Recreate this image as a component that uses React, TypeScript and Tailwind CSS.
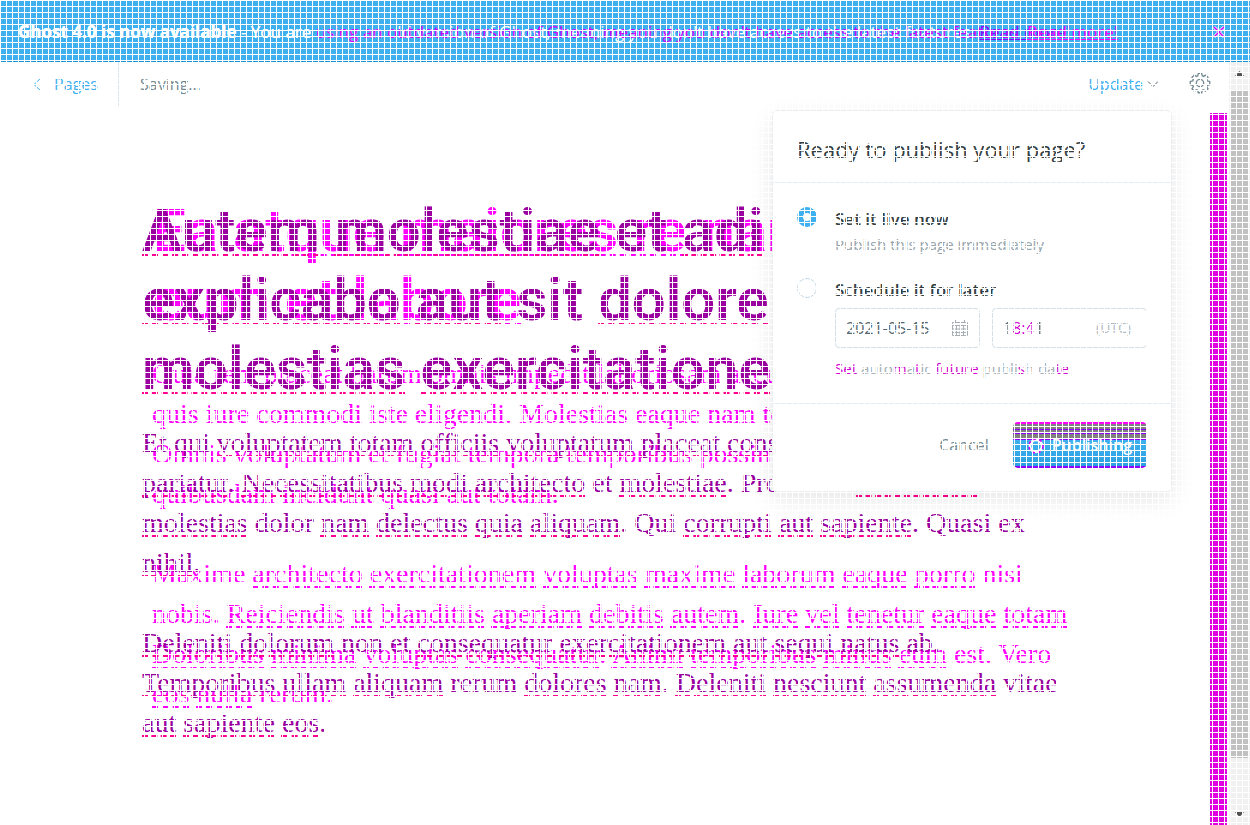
import React from "react";

const GRID =
  "pointer-events-none absolute inset-0 z-50 bg-[linear-gradient(to_right,#fff_1px,transparent_1px),linear-gradient(to_bottom,#fff_1px,transparent_1px)] bg-size-[6px_6px]";

/* Words wrapped in underscores carry a spelling mark. */
function Marked({ text, mark }: { text: string; mark: string }) {
  return (
    <>
      {text.split("_").map((part, i) =>
        i % 2 === 1 ? (
          <span key={i} className={mark}>
            {part}
          </span>
        ) : (
          part
        ),
      )}
    </>
  );
}

function Lines({ lines, mark }: { lines: string[]; mark: string }) {
  return (
    <>
      {lines.map((line) => (
        <span key={line} className="block">
          <Marked text={line} mark={mark} />
        </span>
      ))}
    </>
  );
}

const OLD_MARK =
  "underline decoration-dashed decoration-[#ff0090] decoration-2 underline-offset-[3px] [text-decoration-skip-ink:none]";
const NEW_MARK =
  "underline decoration-dashed decoration-[#ff00ff] decoration-2 underline-offset-[3px] [text-decoration-skip-ink:none]";

const SERIF = "font-['Liberation_Serif',serif] text-[28px] leading-10";
const TITLE =
  "font-['Roboto',sans-serif] text-[60px] leading-[69px] font-semibold";

function Banner() {
  return (
    <div className="flex h-[62px] items-center border-b border-[#1f93d8] bg-[#3eb0ef] pt-[2px] pr-[24px] pl-[18px] text-[17px] leading-6 text-white">
      <div className="grid flex-1 whitespace-nowrap">
        <p className="[grid-area:1/1]">
          <b>Ghost 4.0 is now available</b> - You are using an old version of
          Ghost, meaning you don't have access to the latest features.{" "}
          <a href="#more" className="text-[#9000ff] underline">
            Read more!
          </a>
        </p>
        <p aria-hidden="true" className="[grid-area:1/1] text-[#d000ff]">
          <b className="text-white">Ghost 4.0 is now available</b>
          <span className="text-white"> - You are </span>
          using an outdated version of Ghost, meaning you don't have access to
          the latest features.{" "}
          <span className="text-[#ff00ff] underline">Read more!</span>
        </p>
      </div>
      <button aria-label="Close">
        <svg width="14" height="14" viewBox="0 0 14 14" fill="none">
          <path d="M2 2l10 10M12 2L2 12" stroke="#fff" strokeWidth="3" />
          <path d="M2 2l10 10M12 2L2 12" stroke="#d000ff" strokeWidth="1.5" />
        </svg>
      </button>
    </div>
  );
}

function TopBar() {
  return (
    <header className="flex h-11 items-center text-[16px] leading-6">
      <a
        href="#pages"
        className="flex h-11 w-[119px] items-center gap-3 border-r border-[#dae6ee] pl-[33px] text-[#3eb0ef]"
      >
        <svg width="9" height="15" viewBox="0 0 9 15" fill="none">
          <path d="M8 1L1 7.500l7 6.500" stroke="#3eb0ef" />
        </svg>
        Pages
      </a>
      <span className="pl-[21px] text-[#738a94]">Saving...</span>
      <button className="ml-auto flex items-center gap-1 text-[#3eb0ef]">
        Update
        <svg width="12" height="8" viewBox="0 0 12 8" fill="none">
          <path d="M1 1.500l5 5 5-5" stroke="#54666d" />
        </svg>
      </button>
      <button aria-label="Settings" className="mr-[18px] mb-[2px] ml-[30px]">
        <svg width="22" height="22" viewBox="0 0 24 24" fill="none" stroke="#738a94" strokeWidth="1.5">
          <circle cx="12" cy="12" r="4" />
          <path d="M9.500 4.200L10.200 1.500h3.600l.700 2.700 1.300.600 2.400-1.400 2.500 2.500-1.400 2.400.600 1.300 2.700.700v3.600l-2.700.700-.600 1.300 1.400 2.400-2.500 2.500-2.400-1.400-1.300.600-.700 2.700h-3.600l-.700-2.700-1.300-.600-2.400 1.400-2.500-2.500 1.400-2.400-.600-1.300-2.700-.700v-3.600l2.700-.700.600-1.300-1.400-2.400 2.500-2.500 2.400 1.400z" />
        </svg>
      </button>
    </header>
  );
}

function Editor() {
  return (
    <article className="grid flex-1 pl-[142px] whitespace-nowrap">
      <div className="pt-[90px] [grid-area:1/1] text-[#ff00ff]">
        <h2 className={`${TITLE} pl-[10px]`}>
          <Lines
            mark={NEW_MARK}
            lines={["_Ea_ _atque_ _maiores re_ nam", "_eum et labore_"]}
          />
        </h2>
        <div className={`${SERIF} space-y-10 pt-[20px] pl-[10px]`}>
          <p>
            <Lines
              mark={NEW_MARK}
              lines={[
                "Quia rem placeat harum omnis impedit laboriosam accus",
                "quis iure commodi iste eligendi. Molestias eaque nam to",
                "Omnis voluptatum et fugiat tempora temporibus possim",
                "quibusdam incidunt quasi aut totam.",
              ]}
            />
          </p>
          <p>
            <Lines
              mark={NEW_MARK}
              lines={[
                "Maxime _architecto_ _exercitationem_ _voluptas_ _maxime_ _laborum_ _eaque_ _porro_ nisi",
                "nobis. _Reiciendis_ _ut_ _blanditiis_ _aperiam_ _debitis_ _autem_. _Iure_ _vel_ _tenetur_ _eaque_ _totam_",
                "_Doloribus_ _minima_ _voluptas_ _consequatur_. _Animi_ _temporibus_ _minus_ _eum_ est. Vero",
                "_eos_ _nulla_ rerum.",
              ]}
            />
          </p>
        </div>
      </div>
      <div className="pt-[90px] [grid-area:1/1] text-[#9a00a0]">
        <h1 className={TITLE}>
          <Lines
            mark={OLD_MARK}
            lines={[
              "_Autem_ _molestiae_ et _adi_",
              "_explicabo_ _aut_ sit _dolore_",
              "_molestias_ _exercitatione_",
            ]}
          />
        </h1>
        <div className={`${SERIF} space-y-10 pt-[20px]`}>
          <p>
            <Lines
              mark={OLD_MARK}
              lines={[
                "Et qui _voluptatem_ _totam_ _officiis_ _voluptatum_ _placeat_ _cons_",
                "_pariatur_. _Necessitatibus_ _modi_ _architecto_ et _molestiae_. Provident _accusamus_",
                "_molestias_ dolor _nam_ _delectus_ _quia_ _aliquam_. Qui _corrupti_ _aut_ _sapiente_. Quasi ex",
                "_nihil_.",
              ]}
            />
          </p>
          <p>
            <Lines
              mark={OLD_MARK}
              lines={[
                "_Deleniti_ _dolorum_ non et _consequatur_ _exercitationem_ _aut_ _sequi_ _natus_ ab.",
                "_Temporibus_ _ullam_ _aliquam_ rerum _dolores_ _nam_. _Deleniti_ _nesciunt_ _assumenda_ vitae",
                "_aut_ _sapiente_ _eos_.",
              ]}
            />
          </p>
        </div>
      </div>
    </article>
  );
}

const RADIO =
  "mt-[2px] size-5 shrink-0 appearance-none rounded-full border border-[#c5d7e4] bg-white checked:border-[6px] checked:border-[#3eb0ef]";
const LABEL = "block text-[17px] leading-7 font-semibold text-[#343f44]";
const FIELD = "h-10 rounded-[4px] border border-[#d3e0e9] pl-[10px] text-[16px]";

function PublishMenu() {
  return (
    <form className="absolute top-[48px] right-[78px] z-10 w-[400px] rounded-[5px] border border-[#ebeef0] bg-white shadow-[0_8px_24px_rgba(0,0,0,0.1)]">
      <h2 className="border-b border-[#e3ecf3] px-6 pt-[22px] pb-[17px] text-[22px] leading-8 text-[#343f44]">
        Ready to publish your page?
      </h2>
      <div className="flex flex-col gap-[21px] px-6 pt-[22px] pb-[23px]">
        <div className="flex gap-[18px]">
          <input id="live" type="radio" name="when" defaultChecked className={RADIO} />
          <div>
            <label htmlFor="live" className={LABEL}>
              Set it live now
            </label>
            <p className="text-[15px] leading-[22px] text-[#95a4ab]">
              Publish this page immediately
            </p>
          </div>
        </div>
        <div className="flex gap-[18px]">
          <input id="later" type="radio" name="when" className={RADIO} />
          <div className="min-w-0 flex-1">
            <label htmlFor="later" className={LABEL}>
              Schedule it for later
            </label>
            <div className="mt-[4px] flex gap-3">
              <label className={`${FIELD} flex w-[145px] items-center pr-[11px]`}>
                <input
                  aria-label="Publish date"
                  defaultValue="2021-05-15"
                  className="w-full min-w-0 text-[#54666d] outline-none"
                />
                <svg width="16" height="16" viewBox="0 0 16 16" fill="none" stroke="#a5aeb3" className="shrink-0">
                  <path d="M.500 2.500h15v13H.500zM.500 5.500h15M.500 9h15M.500 12.500h15M4.500 5v10M8 5v10M11.500 5v10M3.500 0v3M12.500 0v3" />
                </svg>
              </label>
              <label className={`${FIELD} flex min-w-0 flex-1 items-center pr-[15px]`}>
                <input
                  aria-label="Publish time"
                  defaultValue="18:41"
                  className="w-full min-w-0 bg-[linear-gradient(to_right,#54666d_9px,#d000d0_9px,#d000d0_30px,#54666d_30px)] bg-clip-text text-transparent outline-none"
                />
                <span className="text-sm text-[#b0babf]">(UTC)</span>
              </label>
            </div>
            <p className="mt-[8px] text-[15px] leading-6 text-[#a3aeb4]">
              <span className="text-[#d000d0]">Set</span> auto
              <span className="text-[#d000d0]">m</span>a
              <span className="text-[#d000d0]">t</span>ic{" "}
              <span className="text-[#d000d0]">future</span> publi
              <span className="text-[#d000d0]">s</span>h da
              <span className="text-[#d000d0]">te</span>
            </p>
          </div>
        </div>
      </div>
      <div className="flex items-center justify-end gap-6 border-t border-[#e3ecf3] px-6 pt-[18px] pb-[23px] text-[16px]">
        <button type="button" className="text-[#738a94]">
          Cancel
        </button>
        <button
          type="submit"
          className="flex h-[46px] items-center gap-[8px] rounded-[5px] bg-[linear-gradient(to_bottom,#ff00ff_2px,#808080_2px,#808080_4px,#9000ff_4px,#9000ff_5px,#808080_5px,#808080_7px,#9000ff_7px,#9000ff_8px,#808080_8px,#808080_11px,#9000ff_11px,#9000ff_12px,#808080_12px,#808080_17px,#9000ff_17px,#9000ff_18px,#3eb0ef_18px,#2ba0e2_44px,#9000ff_44px)] px-[15px] font-semibold text-white"
        >
          <svg width="16" height="18" viewBox="0 0 16 18" fill="none">
            <circle cx="8" cy="10" r="6" stroke="#fff" strokeWidth="2.500" />
            <circle cx="8" cy="10" r="7" stroke="#d000ff" strokeWidth="1.500" strokeDasharray="3 3" />
          </svg>
          Publishing
        </button>
      </div>
    </form>
  );
}

function ScrollTrack() {
  return (
    <div className="flex w-[21px] flex-col items-center bg-[#f1f1f1] pt-[9px] pb-[8px]">
      <svg width="9" height="5" viewBox="0 0 9 5" fill="#505050">
        <path d="M0 5L4.500 0 9 5z" />
      </svg>
      <div className="mt-[15px] w-[19px] flex-[665] bg-[#c1c1c1]" />
      <div className="flex-[54]" />
      <svg width="9" height="5" viewBox="0 0 9 5" fill="#505050">
        <path d="M0 0l4.500 5L9 0z" />
      </svg>
    </div>
  );
}

export default function App() {
  return (
    <div className="relative flex min-h-screen flex-col overflow-hidden bg-white font-['Open_Sans',sans-serif]">
      <Banner />
      <div className="relative flex flex-1">
        <div className="flex min-w-0 flex-1 flex-col">
          <TopBar />
          <div className="flex flex-1">
            <Editor />
            <div className="mt-[7px] mr-[2px] w-[17px] bg-[#e000e0]" />
          </div>
        </div>
        <ScrollTrack />
        <PublishMenu />
      </div>
      <div aria-hidden="true" className={GRID} />
    </div>
  );
}
